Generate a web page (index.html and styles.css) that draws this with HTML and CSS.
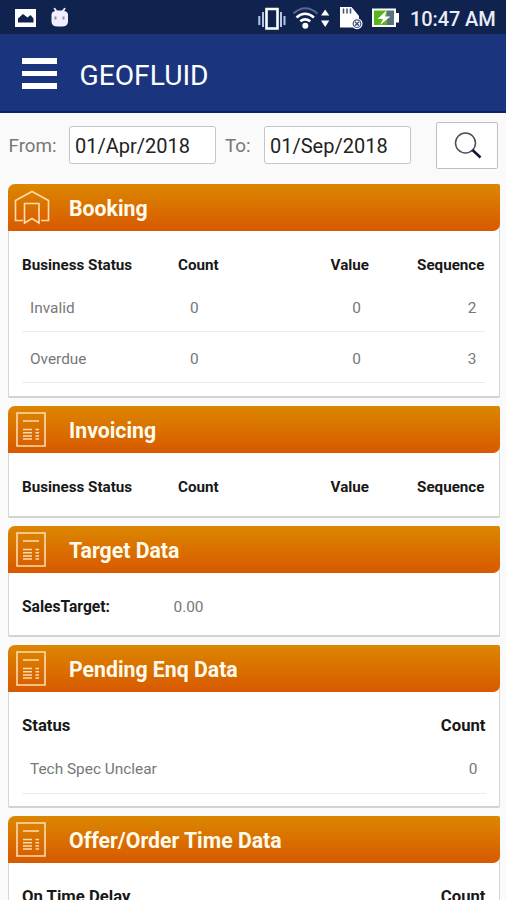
FILE: index.html
```html
<!DOCTYPE html>
<html lang="en">
<head>
<meta charset="utf-8">
<title>GEOFLUID</title>
<link rel="stylesheet" href="styles.css">
</head>
<body>
<svg class="defs" width="0" height="0" aria-hidden="true">
  <symbol id="doc" viewBox="0 0 30 35">
    <path d="M1 1H29V34H1Z" fill="none" stroke="#ffdcae" stroke-width="1.6"/>
    <path d="M7 9H23M7 17.5H16M7 20.7H16M7 23.9H16M7 27H16M19.500 17.500H23M19.500 20.700H23M19.500 23.900H23M19.500 27H23" fill="none" stroke="#ffdcae" stroke-width="1.5"/>
  </symbol>
</svg>
<div class="status">
  <svg class="status-left" width="80" height="34" viewBox="0 0 80 34">
    <path fill="#fff" fill-rule="evenodd" d="M15 9H36V27H15ZM18 22.500H33.500V18.500L30.500 15L27.500 17.500L23 14L18 18.500Z"/>
    <path fill="#f1efff" d="M51.500 14Q52 11.500 55 11L53.500 8.300L55 7.700L57 10.500H62L64.300 7.700L65.700 8.300L64.300 11Q67.500 11.500 68 14V22Q67.500 26.500 62 26.500H57.500Q52 26.500 51.500 22Z"/>
    <path fill="#90918f" d="M54.500 16.500H56.500V19.500H54.500ZM62.500 16.500H64.500V19.500H62.500Z"/>
  </svg>
  <svg class="status-right" width="145" height="34" viewBox="255 0 145 34">
    <path fill="none" stroke="#fff" stroke-width="2.600" d="M266.500 9H277.500V28.500H266.500Z"/>
    <path fill="none" stroke="#b4c7df" stroke-width="2" d="M263 12V27M281 12V27M259.300 16V25M284.500 16V25"/>
    <path fill="none" stroke="#566991" stroke-width="2" d="M293.500 13.500Q305 3 317.500 13.500"/>
    <path fill="none" stroke="#fff" stroke-width="2.600" d="M296.500 17.500Q305 10 314 17.500M300.300 21.300Q305 17.500 310.300 21.300"/>
    <circle cx="305.300" cy="25.800" r="3" fill="#fff"/>
    <path fill="#fff" d="M321 15.500L325.200 9.500L329.300 15.500ZM321 20.500H329.300L325.200 27Z"/>
    <path fill="#fff" d="M340 7H351.500L359 16V27.500H340Z"/>
    <path stroke="#44506e" stroke-width="1.500" d="M343.500 8.500V13.500M347 8.500V13.500M350.500 8.500V13.500"/>
    <circle cx="357" cy="23.700" r="5.500" fill="#fff"/>
    <circle cx="357" cy="23.700" r="3.800" fill="#fff" stroke="#46557a" stroke-width="1.200"/>
    <path stroke="#46557a" stroke-width="1.500" d="M355 21.700L359 25.700M359 21.700L355 25.700"/>
    <path fill="#fff" d="M372 8.500H396V13H399V22.500H396V27H372Z"/>
    <path fill="#5ab51c" d="M374 10.500H387V25H374Z"/><path fill="#587080" d="M387 10.500H394V25H387Z"/>
    <path fill="#fff" d="M386.500 10.500L377.500 19H383L380 25L390.500 16.500H385Z"/>
  </svg>
  <span class="clock">10:47 AM</span>
</div>
<header class="appbar">
  <div class="burger"><i></i><i></i><i></i></div>
  <h1>GEOFLUID</h1>
</header>
<main>
  <div class="filter">
    <span class="label from">From:</span><div class="date">01/Apr/2018</div>
    <span class="label to">To:</span><div class="date">01/Sep/2018</div>
    <div class="search"><svg width="30" height="30" viewBox="0 0 30 30"><circle cx="12.500" cy="12" r="10" fill="none" stroke="#4a4f58" stroke-width="1.500"/><path d="M19.500 19L27.500 26.500" stroke="#151440" stroke-width="2.600"/></svg></div>
  </div>
  <section class="card booking">
    <div class="head"><svg width="36" height="36" viewBox="0 0 36 36"><path d="M9 30.500H1.500V10.500L18 1.500L34.500 10.500V30.500H27M10.500 33V13.500H25V33L18 28.500Z" fill="none" stroke="#ffdcae" stroke-width="1.600"/></svg><h2>Booking</h2></div>
    <div class="body">
      <div class="cols"><b>Business Status</b><b>Count</b><b>Value</b><b>Sequence</b></div>
      <div class="cols row"><span>Invalid</span><span>0</span><span>0</span><span>2</span></div>
      <div class="cols row"><span>Overdue</span><span>0</span><span>0</span><span>3</span></div>
    </div>
  </section>
  <section class="card invoicing">
    <div class="head"><svg width="30" height="35"><use href="#doc"/></svg><h2>Invoicing</h2></div>
    <div class="body"><div class="cols"><b>Business Status</b><b>Count</b><b>Value</b><b>Sequence</b></div></div>
  </section>
  <section class="card target">
    <div class="head"><svg width="30" height="35"><use href="#doc"/></svg><h2>Target Data</h2></div>
    <div class="body"><div class="pair"><b>SalesTarget:</b><span>0.00</span></div></div>
  </section>
  <section class="card pending">
    <div class="head"><svg width="30" height="35"><use href="#doc"/></svg><h2>Pending Enq Data</h2></div>
    <div class="body">
      <div class="ends"><b>Status</b><b>Count</b></div>
      <div class="ends row"><span>Tech Spec Unclear</span><span>0</span></div>
    </div>
  </section>
  <section class="card offer">
    <div class="head"><svg width="30" height="35"><use href="#doc"/></svg><h2>Offer/Order Time Data</h2></div>
    <div class="body"><div class="ends"><b>On Time Delay</b><b>Count</b></div></div>
  </section>
</main>
</body>
</html>
```
FILE: styles.css
```css
* { box-sizing: border-box; }
html, body { height: 100%; }
body { margin: 0; overflow: hidden; background: #fafafa; font-family: Roboto, "Liberation Sans", sans-serif; white-space: nowrap; }
.defs { position: absolute; }
.status { height: 34px; background: #10234f; display: flex; align-items: center; color: #e8edf8; }
.status svg { display: block; flex: none; }
.status-right { margin-left: 175px; }
.clock { margin: 4px 0 0 10px; font-size: 20px; line-height: 24px; font-weight: 500; letter-spacing: -.1px; }
.appbar { height: 79px; background: #1a357d; border-bottom: 2px solid #101f69; display: flex; align-items: center; padding: 2px 0 0 22px; }
.burger { width: 35px; display: flex; flex-direction: column; gap: 7px; margin-top: 0; }
.burger i { height: 5.500px; background: #fff; }
h1 { margin: 4px 0 0 22.500px; color: #fff; font-size: 28.200px; font-weight: 400; line-height: 34px; }
main { padding: 0 7px 0 8px; }
.filter { height: 71px; display: flex; align-items: flex-start; padding-top: 9px; }
.label { font-size: 18.800px; line-height: 24px; color: #777; margin-top: 12px; flex: none; }
.from { width: 61px; padding-left: .5px; }
.to { width: 39px; margin-left: 9px; }
.date { width: 147px; height: 38px; margin-top: 4px; flex: none; border: 1.500px solid #c6c6c6; border-radius: 3px; background: #fff; color: #222; font-size: 20px; line-height: 38px; padding-left: 5px; }
.search { width: 62px; height: 47px; margin-left: 25px; flex: none; border: 1px solid #bfbfbf; border-radius: 2px; background: #fff; padding: 8px 0 0 16px; }
.card { width: 491.500px; margin-bottom: 8px; background: #fff; border-radius: 7px 2px 2px 2px; box-shadow: inset 1px 0 #d6d6d6, inset -1px 0 #d6d6d6, inset 0 -2px #d2d2d2; }
.booking { height: 214px; }
.invoicing { height: 112px; }
.target { height: 111px; }
.pending { height: 163px; }
.offer { height: 160px; }
.head { height: 47px; border-radius: 7px 2px 7px 0; background: linear-gradient(#db8700, #d85900); display: flex; align-items: center; }
.head svg { display: block; margin-left: 8px; flex: none; }
.booking .head svg { margin-left: 6px; }
.head h2 { margin: 2px 0 0 23px; color: #fffbec; font-size: 21.250px; line-height: 26px; font-weight: 700; }
.booking .head h2 { margin-left: 19px; }
.body { padding: 18px 15px 0 14px; font-size: 15.400px; line-height: 18px; color: #777; }
b { color: #181818; font-weight: 700; }
.cols { display: grid; grid-template-columns: 156px 95px 96px 1fr; height: 32px; padding-top: 7px; }
.cols b { font-size: 15.200px; }
.cols > :nth-child(3), .cols > :nth-child(4) { text-align: right; }
.row { height: 51px; padding: 17px 8px 0; border-bottom: 1px solid #ececec; }
.cols.row, .ends.row { padding: 18px 8px 0; }
.cols.row { height: 51px; grid-template-columns: 160px 84px 87px 1fr; }
.pair { display: flex; padding-top: 7px; }
.pair b { width: 151px; font-size: 15.600px; }
.pair span { padding-left: .5px; }
.ends { display: flex; justify-content: space-between; height: 32px; padding-top: 7px; margin-right: -1px; }
.ends b { font-size: 16.700px; }
.ends.row { height: 52px; }
```
